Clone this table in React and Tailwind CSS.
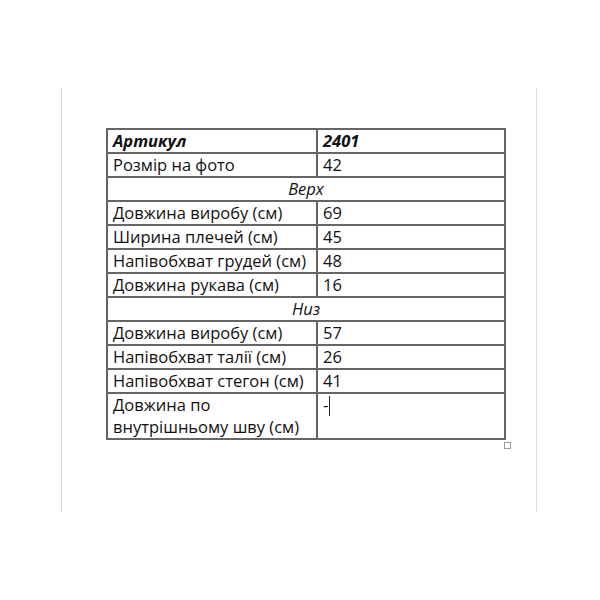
import React from "react";

const rows = [
  { type: "head", a: "Артикул", b: "2401" },
  { type: "row", a: "Розмір на фото", b: "42" },
  { type: "sec", a: "Верх" },
  { type: "row", a: "Довжина виробу (см)", b: "69" },
  { type: "row", a: "Ширина плечей (см)", b: "45" },
  { type: "row", a: "Напівобхват грудей (см)", b: "48" },
  { type: "row", a: "Довжина рукава (см)", b: "16" },
  { type: "sec", a: "Низ" },
  { type: "row", a: "Довжина виробу (см)", b: "57" },
  { type: "row", a: "Напівобхват талії (см)", b: "26" },
  { type: "row", a: "Напівобхват стегон (см)", b: "41" },
];

export default function App() {
  const cell = "border-2 border-[#666666] px-[5px] py-0 align-middle leading-[22px] whitespace-nowrap overflow-hidden";
  return (
    <div className="w-[600px] h-[600px] bg-white pt-[88px] pl-[61px]" style={{ fontFamily: '"Open Sans", "Noto Sans", sans-serif' }}>
      <div className="w-[476px] h-[424px] border-l border-r border-[#dcdcdc] pt-[40px] pl-[44px] text-[16.5px] text-[#111111]">
        <table className="border-collapse table-fixed w-[398px]">
          <colgroup>
            <col className="w-[210px]" />
            <col className="w-[188px]" />
          </colgroup>
          <tbody>
            {rows.map((r, i) =>
              r.type === "sec" ? (
                <tr key={i} className="h-[24px]">
                  <td colSpan={2} className={cell + " text-center italic"}>{r.a}</td>
                </tr>
              ) : (
                <tr key={i} className="h-[24px]">
                  <td className={cell + (r.type === "head" ? " font-bold italic" : "")}>{r.a}</td>
                  <td className={cell + (r.type === "head" ? " font-bold italic" : "")}>{r.b}</td>
                </tr>
              )
            )}
            <tr className="h-[43px]">
              <td className={cell + " leading-[22px]"}>
                Довжина по
                <br />
                внутрішньому шву (см)
              </td>
              <td className={cell + " align-top"}>
                <span className="inline-flex items-start pt-[1px]">
                  <span className="leading-[20px]">-</span>
                  <span className="inline-block w-[1px] h-[20px] bg-[#222] mt-[1px] ml-[1px]" />
                </span>
              </td>
            </tr>
          </tbody>
        </table>
        <div className="w-[7px] h-[7px] border border-[#9a9a9a] ml-[398px] mt-[2px]" />
      </div>
    </div>
  );
}
